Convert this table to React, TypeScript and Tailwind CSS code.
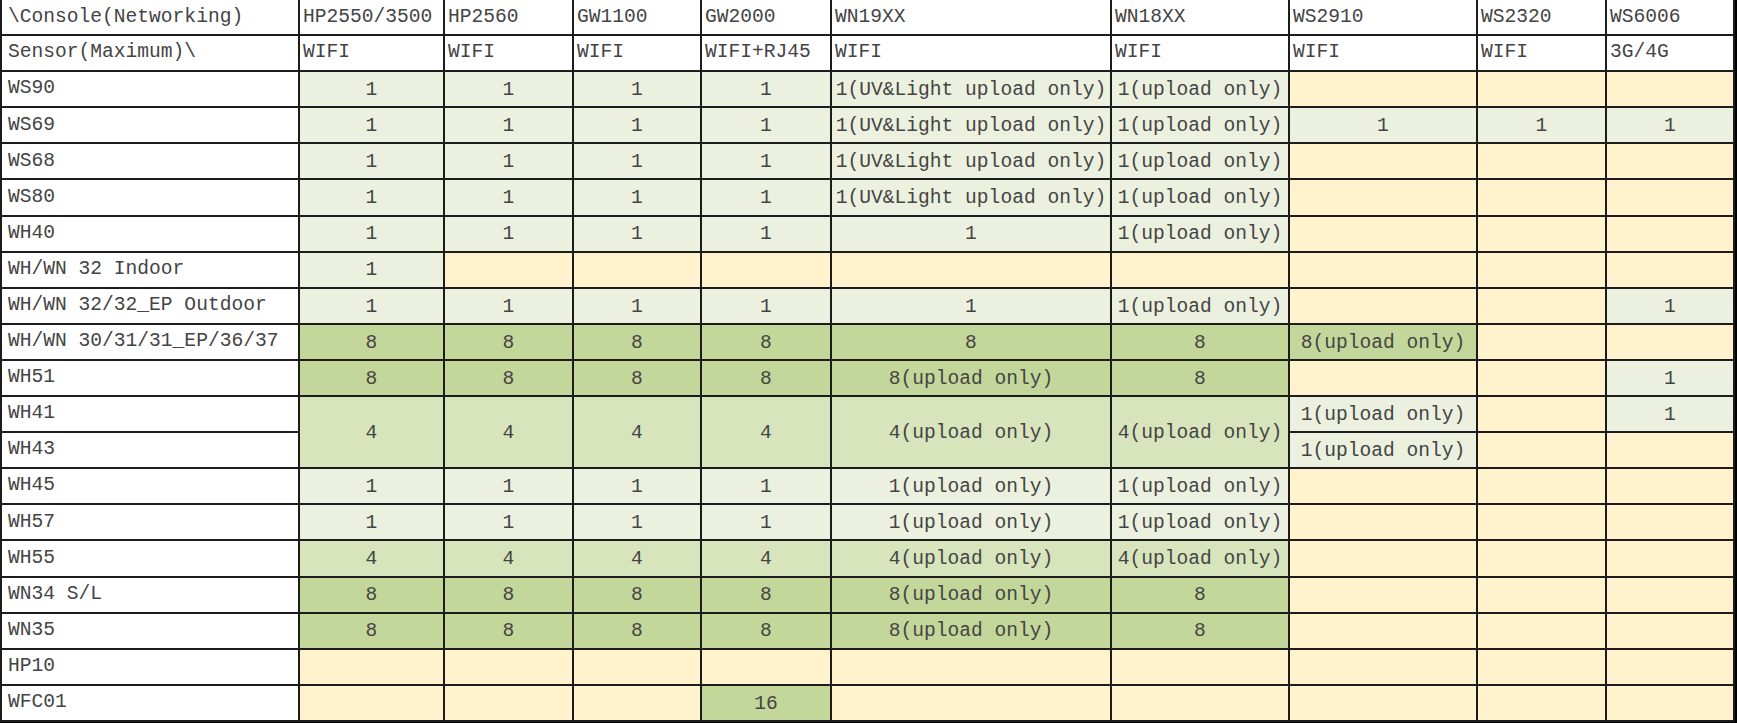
type Tone = "L" | "M" | "D" | "Y";

interface Cell {
  t?: string;
  c: Tone;
  rs?: number;
}

interface Row {
  label: string;
  cells: Cell[];
}

const toneClass: Record<Tone, string> = {
  L: "bg-[#ebf1de]",
  M: "bg-[#d8e4bc]",
  D: "bg-[#c4d79b]",
  Y: "bg-[#fff2cc]",
};

const consoles = ["HP2550/3500", "HP2560", "GW1100", "GW2000", "WN19XX", "WN18XX", "WS2910", "WS2320", "WS6006"];
const links = ["WIFI", "WIFI", "WIFI", "WIFI+RJ45", "WIFI", "WIFI", "WIFI", "WIFI", "3G/4G"];
const widths = ["w-[298px]", "w-[145px]", "w-[129px]", "w-[128px]", "w-[130px]", "w-[280px]", "w-[178px]", "w-[188px]", "w-[129px]", "w-[128px]"];

const l = (t?: string): Cell => ({ t, c: "L" });
const m = (t?: string, rs?: number): Cell => ({ t, c: "M", rs });
const d = (t?: string): Cell => ({ t, c: "D" });
const y = (): Cell => ({ c: "Y" });

const uv = "1(UV&Light upload only)";
const up1 = "1(upload only)";

const rows: Row[] = [
  { label: "WS90", cells: [l("1"), l("1"), l("1"), l("1"), l(uv), l(up1), y(), y(), y()] },
  { label: "WS69", cells: [l("1"), l("1"), l("1"), l("1"), l(uv), l(up1), l("1"), l("1"), l("1")] },
  { label: "WS68", cells: [l("1"), l("1"), l("1"), l("1"), l(uv), l(up1), y(), y(), y()] },
  { label: "WS80", cells: [l("1"), l("1"), l("1"), l("1"), l(uv), l(up1), y(), y(), y()] },
  { label: "WH40", cells: [l("1"), l("1"), l("1"), l("1"), l("1"), l(up1), y(), y(), y()] },
  { label: "WH/WN 32 Indoor", cells: [l("1"), y(), y(), y(), y(), y(), y(), y(), y()] },
  { label: "WH/WN 32/32_EP Outdoor", cells: [l("1"), l("1"), l("1"), l("1"), l("1"), l(up1), y(), y(), l("1")] },
  { label: "WH/WN 30/31/31_EP/36/37", cells: [d("8"), d("8"), d("8"), d("8"), d("8"), d("8"), d("8(upload only)"), y(), y()] },
  { label: "WH51", cells: [d("8"), d("8"), d("8"), d("8"), d("8(upload only)"), d("8"), y(), y(), l("1")] },
  {
    label: "WH41",
    cells: [m("4", 2), m("4", 2), m("4", 2), m("4", 2), m("4(upload only)", 2), m("4(upload only)", 2), l(up1), y(), l("1")],
  },
  { label: "WH43", cells: [l(up1), y(), y()] },
  { label: "WH45", cells: [l("1"), l("1"), l("1"), l("1"), l(up1), l(up1), y(), y(), y()] },
  { label: "WH57", cells: [l("1"), l("1"), l("1"), l("1"), l(up1), l(up1), y(), y(), y()] },
  { label: "WH55", cells: [m("4"), m("4"), m("4"), m("4"), m("4(upload only)"), m("4(upload only)"), y(), y(), y()] },
  { label: "WN34 S/L", cells: [d("8"), d("8"), d("8"), d("8"), d("8(upload only)"), d("8"), y(), y(), y()] },
  { label: "WN35", cells: [d("8"), d("8"), d("8"), d("8"), d("8(upload only)"), d("8"), y(), y(), y()] },
  { label: "HP10", cells: [y(), y(), y(), y(), y(), y(), y(), y(), y()] },
  { label: "WFC01", cells: [y(), y(), y(), d("16"), y(), y(), y(), y(), y()] },
];

const cellBase = "border-2 border-[#1c1c1c] p-0 align-middle leading-none whitespace-nowrap overflow-hidden";

export default function App() {
  return (
    <div className="w-[1737px] h-[723px] bg-black overflow-hidden font-['Liberation_Mono',monospace] text-[19.6px] text-[#444444]">
      <table className="table-fixed border-collapse bg-white -mt-[1px] w-[1734px]">
        <colgroup>
          {widths.map((w, i) => (
            <col key={i} className={w} />
          ))}
        </colgroup>
        <tbody>
          {/* Console names */}
          <tr className="h-[36.1px]">
            <td className={`${cellBase} border-t-0 pl-[6px] pt-[2px] text-left`}>\Console(Networking)</td>
            {consoles.map((c) => (
              <td key={c} className={`${cellBase} border-t-0 pl-[3px] pt-[2px] text-left`}>
                {c}
              </td>
            ))}
          </tr>
          {/* Connection type */}
          <tr className="h-[36.1px]">
            <td className={`${cellBase} pl-[6px] text-left`}>Sensor(Maximum)\</td>
            {links.map((c, i) => (
              <td key={i} className={`${cellBase} pl-[3px] text-left`}>
                {c}
              </td>
            ))}
          </tr>
          {rows.map((row) => (
            <tr key={row.label} className="h-[36.1px]">
              <td className={`${cellBase} pl-[6px] text-left bg-white`}>{row.label}</td>
              {row.cells.map((cell, i) => (
                <td key={i} rowSpan={cell.rs} className={`${cellBase} pt-[3px] text-center ${toneClass[cell.c]}`}>
                  {cell.t}
                </td>
              ))}
            </tr>
          ))}
        </tbody>
      </table>
    </div>
  );
}
